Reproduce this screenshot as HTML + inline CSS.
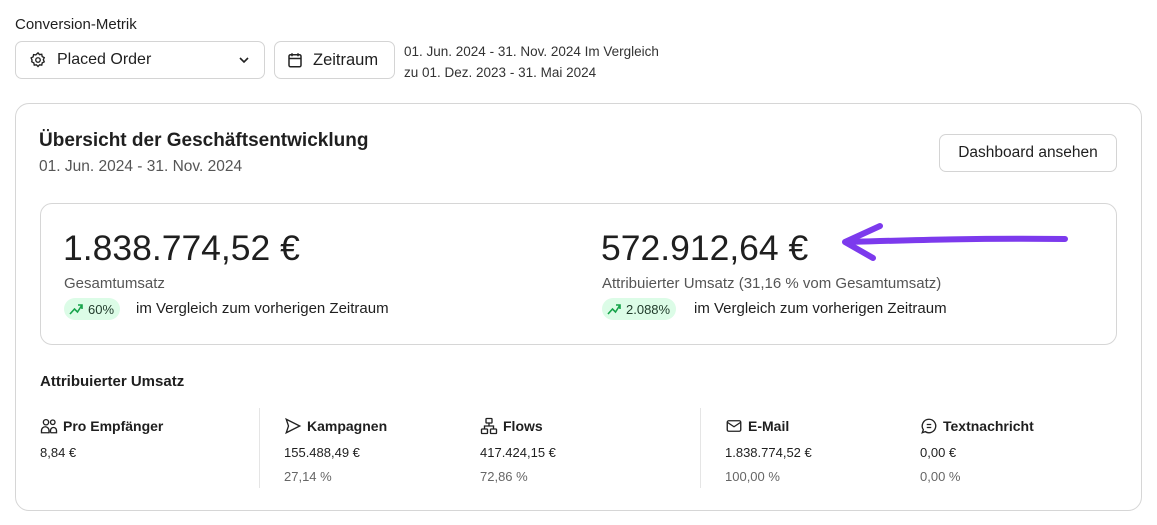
<!DOCTYPE html>
<html><head><meta charset="utf-8"><style>
*{box-sizing:border-box;margin:0;padding:0}
body{width:1157px;height:525px;background:#fff;font-family:"Liberation Sans",sans-serif;color:#1f1f1f;position:relative;overflow:hidden}
.a{position:absolute;white-space:nowrap}
.btn{position:absolute;border:1px solid #d4d4d4;border-radius:7px;background:#fff}
.g{color:#555}
.badge{position:absolute;height:22px;background:#dcfce7;border-radius:11px;font-size:13px;color:#1f3a2a;padding:0 6px 0 4px;display:flex;align-items:center;gap:4px}
.h{font-size:14px;font-weight:600;display:flex;align-items:center;gap:5px}
.v{font-size:13px}
.p{font-size:13px;color:#666}
</style></head><body>
<div class="a" style="left:15px;top:16px;font-size:15px">Conversion-Metrik</div>
<div class="btn" style="left:15px;top:41px;width:250px;height:38px"></div>
<svg class="a" style="left:29px;top:51px" width="18" height="18" viewBox="0 0 24 24" fill="none" stroke="#222" stroke-width="1.8"><path d="M12 2.5l2 2.3 3-.4.6 3 2.7 1.4-1.2 2.8 1.2 2.8-2.7 1.4-.6 3-3-.4-2 2.3-2-2.3-3 .4-.6-3-2.7-1.4L4 12 2.8 9.2l2.7-1.4.6-3 3 .4z"/><circle cx="12" cy="12" r="3"/></svg>
<div class="a" style="left:57px;top:51px;font-size:16px">Placed Order</div>
<svg class="a" style="left:238px;top:55px" width="12" height="10" viewBox="0 0 12 10" fill="none" stroke="#222" stroke-width="1.6"><path d="M2 3l4 4 4-4"/></svg>
<div class="btn" style="left:274px;top:41px;width:121px;height:38px"></div>
<svg class="a" style="left:286px;top:51px" width="18" height="18" viewBox="0 0 24 24" fill="none" stroke="#222" stroke-width="2"><rect x="4" y="5" width="16" height="16" rx="2"/><path d="M4 10h16M8 3v4M16 3v4"/></svg>
<div class="a" style="left:313px;top:51px;font-size:16.5px">Zeitraum</div>
<div class="a" style="left:404px;top:41px;font-size:13.5px;line-height:21px;color:#333">01. Jun. 2024 - 31. Nov. 2024 Im Vergleich<br>zu 01. Dez. 2023 - 31. Mai 2024</div>

<div class="a" style="left:15px;top:103px;width:1127px;height:408px;border:1px solid #d6d6d6;border-radius:14px"></div>
<div class="a" style="left:39px;top:130px;font-size:19px;font-weight:600">Übersicht der Geschäftsentwicklung</div>
<div class="a g" style="left:39px;top:158px;font-size:15.5px">01. Jun. 2024 - 31. Nov. 2024</div>
<div class="btn" style="left:939px;top:134px;width:178px;height:38px;border-radius:7px"></div>
<div class="a" style="left:939px;top:144px;width:178px;text-align:center;font-size:15.5px">Dashboard ansehen</div>

<div class="a" style="left:40px;top:203px;width:1077px;height:142px;border:1px solid #d6d6d6;border-radius:12px"></div>
<div class="a" style="left:63px;top:228px;font-size:35.5px">1.838.774,52 €</div>
<div class="a g" style="left:64px;top:275px;font-size:15px">Gesamtumsatz</div>
<div class="badge" style="left:64px;top:298px"><svg width="16" height="14" viewBox="0 0 16 14" fill="none" stroke="#16a34a" stroke-width="1.6"><path d="M2 12l4.5-5 3 3L14 3M10 3h4v4"/></svg>60%</div>
<div class="a" style="left:136px;top:300px;font-size:15px">im Vergleich zum vorherigen Zeitraum</div>

<div class="a" style="left:601px;top:228px;font-size:35.5px">572.912,64 €</div>
<div class="a g" style="left:602px;top:275px;font-size:15px">Attribuierter Umsatz (31,16 % vom Gesamtumsatz)</div>
<div class="badge" style="left:602px;top:298px"><svg width="16" height="14" viewBox="0 0 16 14" fill="none" stroke="#16a34a" stroke-width="1.6"><path d="M2 12l4.5-5 3 3L14 3M10 3h4v4"/></svg>2.088%</div>
<div class="a" style="left:694px;top:300px;font-size:15px">im Vergleich zum vorherigen Zeitraum</div>
<svg class="a" style="left:835px;top:218px" width="240" height="50" viewBox="0 0 240 50" fill="none" stroke="#7c3aed" stroke-width="6" stroke-linecap="round" stroke-linejoin="round"><path d="M12 24C80 22 150 20 230 21"/><path d="M45 8L10 24L38 40"/></svg>

<div class="a" style="left:40px;top:373px;font-size:15px;font-weight:600">Attribuierter Umsatz</div>
<div class="a" style="left:259px;top:408px;width:1px;height:80px;background:#e5e5e5"></div>
<div class="a" style="left:700px;top:408px;width:1px;height:80px;background:#e5e5e5"></div>

<div class="a h" style="left:40px;top:417px"><svg width="18" height="18" viewBox="0 0 24 24" fill="none" stroke="#222" stroke-width="1.8"><circle cx="8" cy="7" r="3.5"/><circle cx="17" cy="7" r="3"/><path d="M2 21v-3a5 5 0 0110 0v3zM14 21v-3a4 4 0 018 0v3h-8"/></svg>Pro Empfänger</div>
<div class="a v" style="left:40px;top:445px">8,84 €</div>

<div class="a h" style="left:284px;top:417px"><svg width="18" height="18" viewBox="0 0 24 24" fill="none" stroke="#222" stroke-width="1.8"><path d="M3 3l18 9-18 9 3-9z"/></svg>Kampagnen</div>
<div class="a v" style="left:284px;top:445px">155.488,49 €</div>
<div class="a p" style="left:284px;top:469px">27,14 %</div>

<div class="a h" style="left:480px;top:417px"><svg width="18" height="18" viewBox="0 0 24 24" fill="none" stroke="#222" stroke-width="1.8"><rect x="8" y="2" width="8" height="6" rx="1"/><rect x="2" y="16" width="8" height="6" rx="1"/><rect x="14" y="16" width="8" height="6" rx="1"/><path d="M12 8v4M6 16v-4h12v4"/></svg>Flows</div>
<div class="a v" style="left:480px;top:445px">417.424,15 €</div>
<div class="a p" style="left:480px;top:469px">72,86 %</div>

<div class="a h" style="left:725px;top:417px"><svg width="18" height="18" viewBox="0 0 24 24" fill="none" stroke="#222" stroke-width="1.8"><rect x="3" y="5" width="18" height="14" rx="2"/><path d="M3 7l9 6 9-6"/></svg>E-Mail</div>
<div class="a v" style="left:725px;top:445px">1.838.774,52 €</div>
<div class="a p" style="left:725px;top:469px">100,00 %</div>

<div class="a h" style="left:920px;top:417px"><svg width="18" height="18" viewBox="0 0 24 24" fill="none" stroke="#222" stroke-width="1.8"><path d="M12 3a9 9 0 11-5 16.5L3 21l1.5-4A9 9 0 0112 3z"/><path d="M9 10h6M9 14h6"/></svg>Textnachricht</div>
<div class="a v" style="left:920px;top:445px">0,00 €</div>
<div class="a p" style="left:920px;top:469px">0,00 %</div>
</body></html>
